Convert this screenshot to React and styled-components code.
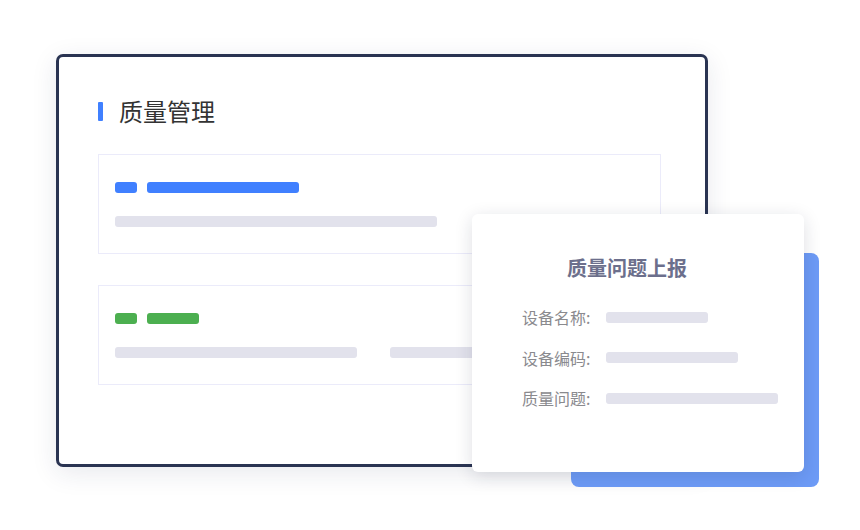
import styled, { createGlobalStyle } from "styled-components";

const GlobalStyle = createGlobalStyle`
  html, body {
    margin: 0;
    padding: 0;
    background: #ffffff;
  }
  body {
    font-family: "Noto Sans CJK SC", "Noto Sans", sans-serif;
  }
`;

const Stage = styled.div`
  position: relative;
  width: 860px;
  height: 530px;
  box-sizing: border-box;
  padding: 54px 0 0 56px;
  overflow: hidden;
`;

const MainCard = styled.div`
  width: 652px;
  height: 413px;
  box-sizing: border-box;
  border: 3px solid #2a3452;
  border-radius: 7px;
  background: #ffffff;
  box-shadow: 0 6px 26px rgba(30, 40, 80, 0.1);
  padding: 42px 44px 0 39px;
  display: flex;
  flex-direction: column;
  gap: 31px;
`;

const Title = styled.div`
  display: flex;
  align-items: center;
  gap: 16px;
  height: 24px;
  font-size: 24px;
  line-height: 24px;
  color: #333333;

  &::before {
    content: "";
    width: 5px;
    height: 19px;
    background: #4080ff;
    border-radius: 1px;
  }
`;

const List = styled.div`
  display: flex;
  flex-direction: column;
  gap: 31px;
`;

const Item = styled.div`
  height: 100px;
  box-sizing: border-box;
  border: 1px solid #ebebfa;
  padding: 27px 16px 0 16px;
  display: flex;
  flex-direction: column;
  gap: 23px;
`;

const Row = styled.div`
  display: flex;
  gap: ${(p) => p.gap || 10}px;
`;

const Bar = styled.div`
  width: ${(p) => p.w}px;
  height: 11px;
  border-radius: 3px;
  background: ${(p) => p.color || "#e2e2ec"};
`;

const Backing = styled.div`
  position: absolute;
  left: 571px;
  top: 253px;
  width: 248px;
  height: 234px;
  border-radius: 8px;
  background: #6d9bf6;
`;

const Popup = styled.div`
  position: absolute;
  left: 472px;
  top: 214px;
  width: 332px;
  height: 258px;
  box-sizing: border-box;
  border-radius: 6px;
  background: #ffffff;
  box-shadow: 0 4px 18px rgba(20, 30, 60, 0.14);
  padding: 40px 0 0 50px;
  display: flex;
  flex-direction: column;
`;

const PopupTitle = styled.div`
  font-size: 20px;
  line-height: 28px;
  font-weight: 600;
  color: #6c6f8c;
  padding-left: 45px;
  margin-bottom: 25px;
`;

const Field = styled.div`
  display: flex;
  align-items: center;
  height: 20px;
  margin-bottom: 20.5px;
`;

const Label = styled.span`
  width: 84px;
  font-size: 16px;
  line-height: 20px;
  color: #8a8a8e;
`;

const fields = [
  { label: "设备名称:", w: 102 },
  { label: "设备编码:", w: 132 },
  { label: "质量问题:", w: 172 },
];

export default function App() {
  return (
    <>
      <GlobalStyle />
      <Stage>
        <MainCard>
          <Title>质量管理</Title>
          <List>
            <Item>
              <Row>
                <Bar w={22} color="#4080ff" />
                <Bar w={152} color="#4080ff" />
              </Row>
              <Row>
                <Bar w={322} />
              </Row>
            </Item>
            <Item>
              <Row>
                <Bar w={22} color="#4caf50" />
                <Bar w={52} color="#4caf50" />
              </Row>
              <Row gap={33}>
                <Bar w={242} />
                <Bar w={230} />
              </Row>
            </Item>
          </List>
        </MainCard>
        <Backing />
        <Popup>
          <PopupTitle>质量问题上报</PopupTitle>
          {fields.map((f) => (
            <Field key={f.label}>
              <Label>{f.label}</Label>
              <Bar w={f.w} />
            </Field>
          ))}
        </Popup>
      </Stage>
    </>
  );
}
